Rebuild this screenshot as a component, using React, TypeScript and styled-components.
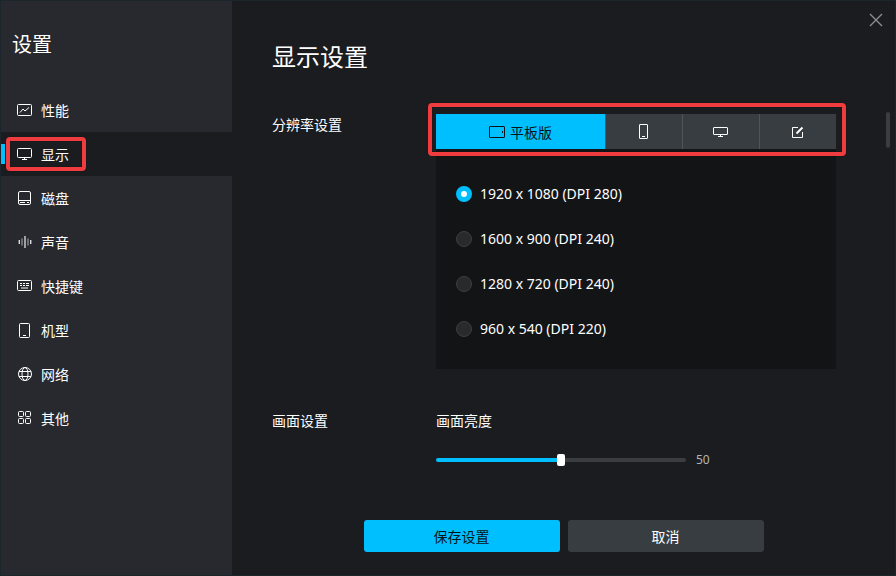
import React, { useId, useState } from "react";
import styled, { createGlobalStyle, css } from "styled-components";

const GlobalStyle = createGlobalStyle`
  *, *::before, *::after { box-sizing: border-box; }
  body {
    margin: 0;
    background: #1b1c1f;
    color: #ffffff;
    font: 14px/20px "Noto Sans", "Noto Sans CJK SC", sans-serif;
  }
  button, input { font: inherit; color: inherit; }
`;

const Window = styled.div`
  display: flex;
  min-height: 100vh;
  border: 1px solid #1b252b;
`;

const Sidebar = styled.aside`
  flex: 0 0 231px;
  background: #28292e;
`;

const SidebarTitle = styled.h1`
  margin: 0;
  padding: 30px 12px 29px 11px;
  font-size: 20px;
  line-height: 28px;
  font-weight: 400;
`;

const Nav = styled.nav`
  display: flex;
  flex-direction: column;
`;

const NavItem = styled.button<{ $active: boolean }>`
  position: relative;
  display: flex;
  align-items: center;
  gap: 9px;
  height: 44px;
  padding: 0 15px;
  border: 0;
  background: none;
  text-align: left;
  cursor: pointer;

  ${(p) =>
    p.$active &&
    css`
      background: #1b1c1f;
      &::before {
        content: "";
        position: absolute;
        left: 0;
        top: 12px;
        width: 4px;
        height: 20px;
        background: #00bfff;
      }
    `}
`;

const ButtonText = styled.span`
  padding-top: 2px;
`;

const Glyph = styled.svg`
  display: block;
  flex: none;
  width: 16px;
  height: 16px;
  fill: none;
  stroke: currentColor;
  stroke-width: 1;
`;

const Highlight = styled.span<{ $area: "nav" | "tabs" }>`
  position: absolute;
  border: 4px solid #f03c3e;
  border-radius: 4px;
  box-shadow: 0 0 1px #000000, inset 0 0 1px #000000;
  pointer-events: none;
  ${(p) =>
    p.$area === "nav"
      ? css`
          left: 5px;
          top: 5px;
          width: 80px;
          height: 34px;
        `
      : css`
          left: -8px;
          right: -10px;
          top: -11px;
          bottom: -7px;
        `}
`;

const Main = styled.main`
  position: relative;
  display: flex;
  flex: 1;
  flex-direction: column;
  min-width: 0;
  padding: 39px 59px 23px 40px;
`;

const CloseButton = styled.button`
  position: absolute;
  top: 11px;
  right: 11px;
  padding: 0;
  border: 0;
  background: none;
  color: #8c8d90;
  cursor: pointer;
`;

const ScrollThumb = styled.div`
  position: absolute;
  top: 111px;
  right: 5px;
  width: 4px;
  height: 36px;
  border-radius: 2px;
  background: #3c3d40;
`;

const PageTitle = styled.h2`
  margin: 0 0 40px;
  font-size: 24px;
  line-height: 34px;
  font-weight: 400;
`;

const Section = styled.section`
  display: grid;
  grid-template-columns: 164px minmax(0, 1fr);
  margin-bottom: 41px;
`;

const SectionTitle = styled.h3`
  margin: 0;
  font-size: 14px;
  line-height: 22px;
  font-weight: 400;
`;

const Tabs = styled.div`
  position: relative;
  display: flex;
  height: 35px;
`;

const Tab = styled.button<{ $active: boolean }>`
  display: flex;
  flex: ${(p) => (p.$active ? "1 1 0" : "0 0 77px")};
  align-items: center;
  justify-content: center;
  gap: 5px;
  padding: 0;
  border: 0;
  background: ${(p) => (p.$active ? "#00bfff" : "#383d41")};
  color: ${(p) => (p.$active ? "#06141a" : "#ffffff")};
  cursor: pointer;

  & + & {
    border-left: 1px solid #505558;
  }
`;

const Options = styled.div`
  display: flex;
  flex-direction: column;
  gap: 23px;
  padding: 34px 20px 29px;
  background: #131416;
`;

const Option = styled.label`
  display: flex;
  align-items: center;
  gap: 8px;
  line-height: 22px;
  cursor: pointer;
`;

const Radio = styled.input`
  appearance: none;
  flex: none;
  width: 16px;
  height: 16px;
  margin: 0;
  border: 1px solid #3e3f42;
  border-radius: 50%;
  background: #292a2c;

  &:checked {
    border: 5px solid #00bfff;
    background: #ffffff;
  }
`;

const FieldLabel = styled.label`
  display: block;
  line-height: 22px;
`;

const SliderRow = styled.div`
  display: flex;
  align-items: center;
  gap: 10px;
  margin-top: 18px;
`;

const Slider = styled.input`
  appearance: none;
  width: 250px;
  height: 12px;
  margin: 0;
  background: none;

  &::-webkit-slider-runnable-track {
    height: 4px;
    border-radius: 2px;
    background: linear-gradient(to right, #00bfff var(--level), #3c3d40 var(--level));
  }
  &::-webkit-slider-thumb {
    appearance: none;
    width: 8px;
    height: 12px;
    margin-top: -4px;
    border-radius: 2px;
    background: #ffffff;
  }
`;

const SliderValue = styled.output`
  color: #b4b5b7;
  font-size: 12px;
`;

const Actions = styled.footer`
  display: flex;
  justify-content: center;
  gap: 8px;
  margin: auto -19px 0 0;
`;

const Action = styled.button<{ $primary?: boolean }>`
  width: 196px;
  height: 32px;
  padding: 2px 0 0;
  border: 0;
  border-radius: 3px;
  background: ${(p) => (p.$primary ? "#00bfff" : "#383d41")};
  color: ${(p) => (p.$primary ? "#06141a" : "#ffffff")};
  cursor: pointer;
`;

function Icon({ children }: { children: React.ReactNode }) {
  return (
    <Glyph viewBox="0 0 16 16" aria-hidden="true">
      {children}
    </Glyph>
  );
}

const navItems = [
  {
    label: "性能",
    icon: (
      <>
        <rect x="1.5" y="2.5" width="14" height="11" rx="1" />
        <path d="M4 10.5 7 7l2 2L13 5.5" />
      </>
    ),
  },
  {
    label: "显示",
    icon: (
      <>
        <rect x="1.5" y="2.5" width="14" height="9" rx="1" />
        <path d="M8.5 11.5v2M6 13.5h5" />
      </>
    ),
  },
  {
    label: "磁盘",
    icon: (
      <>
        <rect x="2.5" y="1.5" width="12" height="13" rx="1.5" />
        <path d="M3 10.5h11M4 12.5h5M11 12.5h2" />
      </>
    ),
  },
  {
    label: "声音",
    icon: (
      <>
        <path stroke="#dcdcde" d="M3.5 6v4M14.5 6v4" />
        <path stroke="#b0b0b3" d="M6 4.5v7M12 4.5v7" />
        <path stroke="#a0a0a4" strokeWidth="2" d="M9 2v12" />
        <path stroke="#707075" d="M2.5 6v4M15.5 6v4" />
      </>
    ),
  },
  {
    label: "快捷键",
    icon: (
      <>
        <rect x="1.5" y="2.5" width="14" height="10" rx="1" />
        <path d="M4 5.5h2M7 5.5h2M10 5.5h3M4 7.5h2M7 7.5h2M10 7.5h3M5 10h7" />
      </>
    ),
  },
  {
    label: "机型",
    icon: (
      <>
        <rect x="3.5" y="1.5" width="10" height="14" rx="1" />
        <path d="M7 13.5h3" />
      </>
    ),
  },
  {
    label: "网络",
    icon: (
      <>
        <circle cx="9" cy="8" r="6.5" />
        <ellipse cx="9" cy="8" rx="3" ry="6.5" />
        <path d="M3 5.5h12M3 10.5h12" />
      </>
    ),
  },
  {
    label: "其他",
    icon: (
      <>
        <rect x="2.5" y="1.5" width="5" height="5" rx="1" />
        <rect x="9.5" y="1.5" width="5" height="5" rx="1" />
        <rect x="2.5" y="8.5" width="5" height="5" rx="1" />
        <rect x="9.5" y="8.5" width="5" height="5" rx="1" />
      </>
    ),
  },
];

const tabs = [
  {
    label: "平板版",
    icon: (
      <>
        <rect x="0.5" y="2.5" width="15" height="11" rx="0.5" />
        <path d="M13.5 7v2" />
      </>
    ),
  },
  {
    label: "手机版",
    icon: (
      <>
        <rect x="3.5" y="0.5" width="8" height="14" rx="0.5" />
        <path d="M6 12.5h3" />
      </>
    ),
  },
  {
    label: "电脑版",
    icon: (
      <>
        <rect x="0.5" y="3.5" width="14" height="7" rx="0.5" />
        <path d="M7.5 11v2M5 12.5h5" />
      </>
    ),
  },
  {
    label: "自定义",
    icon: (
      <>
        <path d="M8 3.5H2.5v10h10V8" />
        <path d="M6.500 9.500 12.500 3.500" strokeWidth="2" />
      </>
    ),
  },
];

const resolutions = [
  "1920 x 1080 (DPI 280)",
  "1600 x 900 (DPI 240)",
  "1280 x 720 (DPI 240)",
  "960 x 540 (DPI 220)",
];

export default function App() {
  const [page, setPage] = useState("显示");
  const [tab, setTab] = useState("平板版");
  const [resolution, setResolution] = useState(resolutions[0]);
  const [brightness, setBrightness] = useState(50);
  const sliderId = useId();

  return (
    <>
      <GlobalStyle />
      <Window>
        <Sidebar>
          <SidebarTitle>设置</SidebarTitle>
          <Nav>
            {navItems.map(({ label, icon }) => (
              <NavItem
                key={label}
                $active={label === page}
                aria-current={label === page ? "page" : undefined}
                onClick={() => setPage(label)}
              >
                <Icon>{icon}</Icon>
                <ButtonText>{label}</ButtonText>
                {label === "显示" && <Highlight $area="nav" />}
              </NavItem>
            ))}
          </Nav>
        </Sidebar>

        <Main>
          <CloseButton aria-label="关闭">
            <Icon>
              <path d="M2 2l12 12M14 2 2 14" strokeWidth="1.4" />
            </Icon>
          </CloseButton>
          <ScrollThumb />
          <PageTitle>显示设置</PageTitle>

          <Section>
            <SectionTitle>分辨率设置</SectionTitle>
            <div>
              <Tabs role="tablist">
                {tabs.map(({ label, icon }) => (
                  <Tab
                    key={label}
                    role="tab"
                    $active={label === tab}
                    aria-selected={label === tab}
                    aria-label={label}
                    onClick={() => setTab(label)}
                  >
                    <Icon>{icon}</Icon>
                    {label === tab && <ButtonText>{label}</ButtonText>}
                  </Tab>
                ))}
                <Highlight $area="tabs" />
              </Tabs>
              <Options role="radiogroup" aria-label="分辨率设置">
                {resolutions.map((value) => (
                  <Option key={value}>
                    <Radio
                      type="radio"
                      name="resolution"
                      checked={value === resolution}
                      onChange={() => setResolution(value)}
                    />
                    {value}
                  </Option>
                ))}
              </Options>
            </div>
          </Section>

          <Section>
            <SectionTitle>画面设置</SectionTitle>
            <div>
              <FieldLabel htmlFor={sliderId}>画面亮度</FieldLabel>
              <SliderRow>
                <Slider
                  id={sliderId}
                  type="range"
                  min={0}
                  max={100}
                  value={brightness}
                  style={{ "--level": `${brightness}%` } as React.CSSProperties}
                  onChange={(e) => setBrightness(Number(e.target.value))}
                />
                <SliderValue htmlFor={sliderId}>{brightness}</SliderValue>
              </SliderRow>
            </div>
          </Section>

          <Actions>
            <Action $primary>保存设置</Action>
            <Action>取消</Action>
          </Actions>
        </Main>
      </Window>
    </>
  );
}
